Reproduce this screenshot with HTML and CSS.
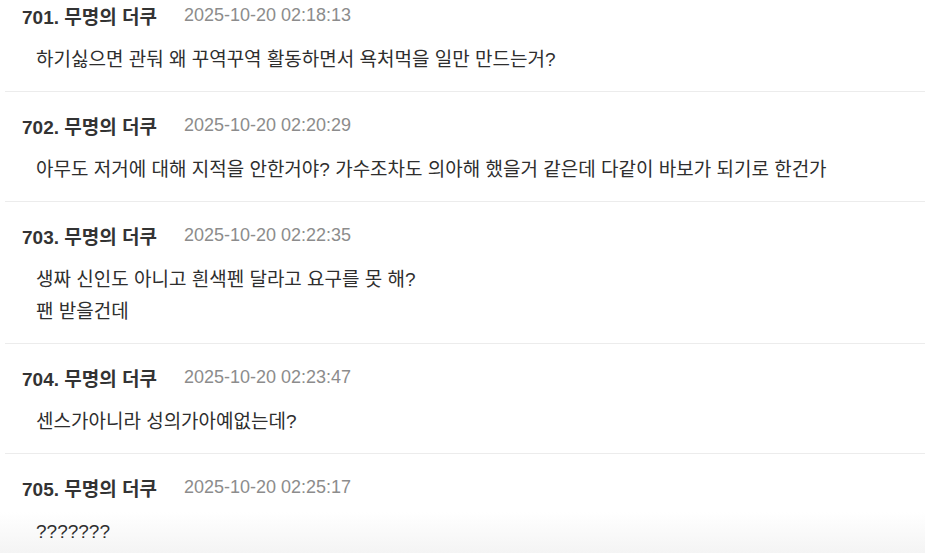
FILE: index.html
```html
<!DOCTYPE html>
<html lang="ko">
<head>
<meta charset="utf-8">
<link rel="stylesheet" href="styles.css">
</head>
<body>
<div class="page">
  <ul class="thread">
    <li class="reply">
      <div class="reply-head"><span class="reply-name">701. 무명의 더쿠</span><span class="reply-date">2025-10-20 02:18:13</span></div>
      <div class="reply-body">하기싫으면 관둬 왜 꾸역꾸역 활동하면서 욕처먹을 일만 만드는거?</div>
    </li>
    <li class="reply">
      <div class="reply-head"><span class="reply-name">702. 무명의 더쿠</span><span class="reply-date">2025-10-20 02:20:29</span></div>
      <div class="reply-body">아무도 저거에 대해 지적을 안한거야? 가수조차도 의아해 했을거 같은데 다같이 바보가 되기로 한건가</div>
    </li>
    <li class="reply">
      <div class="reply-head"><span class="reply-name">703. 무명의 더쿠</span><span class="reply-date">2025-10-20 02:22:35</span></div>
      <div class="reply-body">생짜 신인도 아니고 흰색펜 달라고 요구를 못 해?<br>팬 받을건데</div>
    </li>
    <li class="reply">
      <div class="reply-head"><span class="reply-name">704. 무명의 더쿠</span><span class="reply-date">2025-10-20 02:23:47</span></div>
      <div class="reply-body">센스가아니라 성의가아예없는데?</div>
    </li>
    <li class="reply">
      <div class="reply-head"><span class="reply-name">705. 무명의 더쿠</span><span class="reply-date">2025-10-20 02:25:17</span></div>
      <div class="reply-body">???????</div>
    </li>
  </ul>
</div>
</body>
</html>
```
FILE: styles.css
```css
html, body {
  margin: 0;
  padding: 0;
  background: #ffffff;
}
body {
  font-family: "Liberation Sans", "Noto Sans CJK KR", sans-serif;
  color: #333333;
  width: 925px;
  height: 553px;
  overflow: hidden;
}
.page {
  height: 553px;
  overflow: hidden;
  background: linear-gradient(to bottom, #ffffff 0, #ffffff 512px, #f4f4f4 553px);
}
.thread {
  list-style: none;
  margin: -18px 0 0 5px;
  padding: 0;
}
.reply {
  padding: 20px 0 15px 17px;
  border-bottom: 1px solid #ececec;
}
.reply-head {
  display: flex;
  align-items: center;
  gap: 27px;
  height: 26px;
  margin-bottom: 16px;
}
.reply-name {
  font-size: 19px;
  font-weight: 700;
  color: #333333;
}
.reply-date {
  font-size: 18px;
  color: #8c8c8c;
}
.reply-body {
  padding-left: 14px;
  font-size: 19px;
  line-height: 32px;
  color: #2e2e2e;
}
```
